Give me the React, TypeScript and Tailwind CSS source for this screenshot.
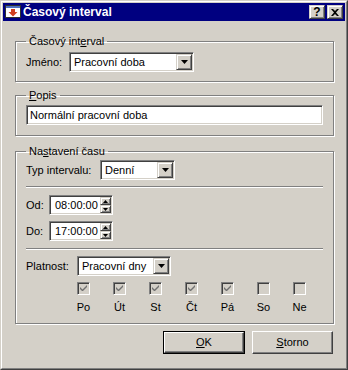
import type { ReactNode } from "react";

const sunken =
  "border border-t-[#808080] border-l-[#808080] border-r-white border-b-white shadow-[inset_1px_1px_0_#404040,inset_-1px_-1px_0_#d4d0c8]";
const raised =
  "border border-t-[#d4d0c8] border-l-[#d4d0c8] border-r-[#404040] border-b-[#404040] shadow-[inset_1px_1px_0_#fff,inset_-1px_-1px_0_#808080]";
const etched = "border border-[#808080] shadow-[inset_1px_1px_0_#fff,1px_1px_0_#fff]";

function DownArrow() {
  return (
    <svg width="7" height="4" viewBox="0 0 7 4">
      <path d="M0 0h7L3.5 4z" fill="#000" />
    </svg>
  );
}

function Combo({ value, width }: { value: string; width: string }) {
  return (
    <div className={`${sunken} ${width} flex h-[20px] items-stretch bg-white p-px`}>
      <div className="flex flex-1 items-center pl-[3px] leading-none">{value}</div>
      <div className={`${raised} flex w-[16px] items-center justify-center bg-[#d4d0c8]`}>
        <DownArrow />
      </div>
    </div>
  );
}

function Spinner({ value }: { value: string }) {
  return (
    <div className={`${sunken} flex h-[20px] w-[64px] items-stretch bg-white p-px`}>
      <div className="flex flex-1 items-center pl-[4px] leading-none">{value}</div>
      <div className="flex w-[11px] flex-col">
        <div className={`${raised} flex flex-1 items-center justify-center bg-[#d4d0c8]`}>
          <svg width="5" height="3" viewBox="0 0 5 3">
            <path d="M2.5 0L5 3H0z" fill="#000" />
          </svg>
        </div>
        <div className={`${raised} flex flex-1 items-center justify-center bg-[#d4d0c8]`}>
          <svg width="5" height="3" viewBox="0 0 5 3">
            <path d="M0 0h5L2.5 3z" fill="#000" />
          </svg>
        </div>
      </div>
    </div>
  );
}

function Group({ title, children, className }: { title: ReactNode; children: ReactNode; className: string }) {
  return (
    <fieldset className={`${etched} ml-[12px] w-[319px] px-[10px] ${className}`}>
      <legend className="px-[3px] leading-[13px]">{title}</legend>
      {children}
    </fieldset>
  );
}

function Separator({ className }: { className: string }) {
  return <div className={`h-[2px] border-t border-t-[#808080] border-b border-b-white ${className}`} />;
}

function DayCheck({ label, checked }: { label: string; checked: boolean }) {
  return (
    <div className="flex w-[13px] flex-col items-center">
      <div className={`${sunken} h-[13px] w-[13px] bg-[#d4d0c8] p-px`}>
        {checked && (
          <svg width="9" height="9" viewBox="0 0 9 9" className="block">
            <path d="M1 3v2l2 2h1l4-4V1L3.5 5.5z" fill="#707070" />
          </svg>
        )}
      </div>
      <div className="mt-[6px] whitespace-nowrap leading-[13px]">{label}</div>
    </div>
  );
}

function Button({ children, isDefault }: { children: ReactNode; isDefault?: boolean }) {
  const bevel =
    "border border-t-white border-l-white border-r-[#404040] border-b-[#404040] shadow-[inset_-1px_-1px_0_#808080]";
  if (isDefault) {
    return (
      <div className="h-[23px] w-[82px] border border-black">
        <div className={`${bevel} flex h-full w-full items-center justify-center bg-[#d4d0c8]`}>{children}</div>
      </div>
    );
  }
  return (
    <div className={`${bevel} flex h-[23px] w-[81px] items-center justify-center bg-[#d4d0c8]`}>{children}</div>
  );
}

function TitleIcon() {
  return (
    <svg width="16" height="16" viewBox="0 0 16 16">
      <rect x="0.5" y="1.5" width="15" height="12" fill="#fff" stroke="#303030" />
      <rect x="1" y="2" width="14" height="2" fill="#5070c0" />
      <path d="M8 4.5l4.5 4.5H10v3H6V9H3.5z" fill="#d04020" transform="rotate(180 8 8.5)" />
    </svg>
  );
}

export default function App() {
  return (
    <div className="h-[370px] w-[348px] border border-t-[#d4d0c8] border-l-[#d4d0c8] border-r-[#404040] border-b-[#404040] bg-[#d4d0c8] font-['Liberation_Sans',Arial,sans-serif] text-[11px] text-black">
      <div className="h-full border border-t-white border-l-white border-r-[#808080] border-b-[#808080] p-px">
        <div className="flex h-[18px] items-center bg-[#000080] pl-[2px] pr-[2px]">
          <TitleIcon />
          <div className="ml-[2px] flex-1 text-[12px] font-bold leading-none text-white">Časový interval</div>
          <div className={`${raised} flex h-[14px] w-[16px] items-center justify-center bg-[#d4d0c8] text-[12px] font-bold leading-none`}>
            ?
          </div>
          <div className={`${raised} ml-[2px] flex h-[14px] w-[16px] items-center justify-center bg-[#d4d0c8]`}>
            <svg width="8" height="7" viewBox="0 0 8 7">
              <path d="M0 0h2l2 2 2-2h2L5 3.5 8 7H6L4 5 2 7H0l3-3.5z" fill="#000" />
            </svg>
          </div>
        </div>

        <Group
          className="mt-[14px] pt-[4px] pb-[9px]"
          title={
            <>
              Časový int<span className="underline">e</span>rval
            </>
          }
        >
          <div className="flex items-center">
            <div className="w-[43px]">Jméno:</div>
            <Combo value="Pracovní doba" width="w-[125px]" />
          </div>
        </Group>

        <Group
          className="mt-[7px] pt-[3px] pb-[10px]"
          title={
            <>
              <span className="underline">P</span>opis
            </>
          }
        >
          <div className={`${sunken} flex h-[20px] w-[297px] items-center bg-white pl-[3px]`}>Normální pracovní doba</div>
        </Group>

        <Group
          className="mt-[9px] pt-[2px] pb-[9px]"
          title={
            <>
              Na<span className="underline">s</span>tavení času
            </>
          }
        >
          <div className="flex items-center">
            <div className="w-[74px]">Typ intervalu:</div>
            <Combo value="Denní" width="w-[75px]" />
          </div>
          <Separator className="mt-[6px]" />
          <div className="mt-[7px] flex items-center">
            <div className="w-[23px]">Od:</div>
            <Spinner value="08:00:00" />
          </div>
          <div className="mt-[6px] flex items-center">
            <div className="w-[23px]">Do:</div>
            <Spinner value="17:00:00" />
          </div>
          <Separator className="mt-[7px]" />
          <div className="mt-[6px] flex items-center">
            <div className="w-[51px]">Platnost:</div>
            <Combo value="Pracovní dny" width="w-[94px]" />
          </div>
          <div className="ml-[51px] mt-[6px] flex gap-[23px]">
            <DayCheck label="Po" checked />
            <DayCheck label="Út" checked />
            <DayCheck label="St" checked />
            <DayCheck label="Čt" checked />
            <DayCheck label="Pá" checked />
            <DayCheck label="So" checked={false} />
            <DayCheck label="Ne" checked={false} />
          </div>
        </Group>

        <div className="mt-[7px] flex gap-[7px] pl-[160px]">
          <Button isDefault>
            <span className="underline">O</span>K
          </Button>
          <Button>
            <span className="underline">S</span>torno
          </Button>
        </div>
      </div>
    </div>
  );
}
